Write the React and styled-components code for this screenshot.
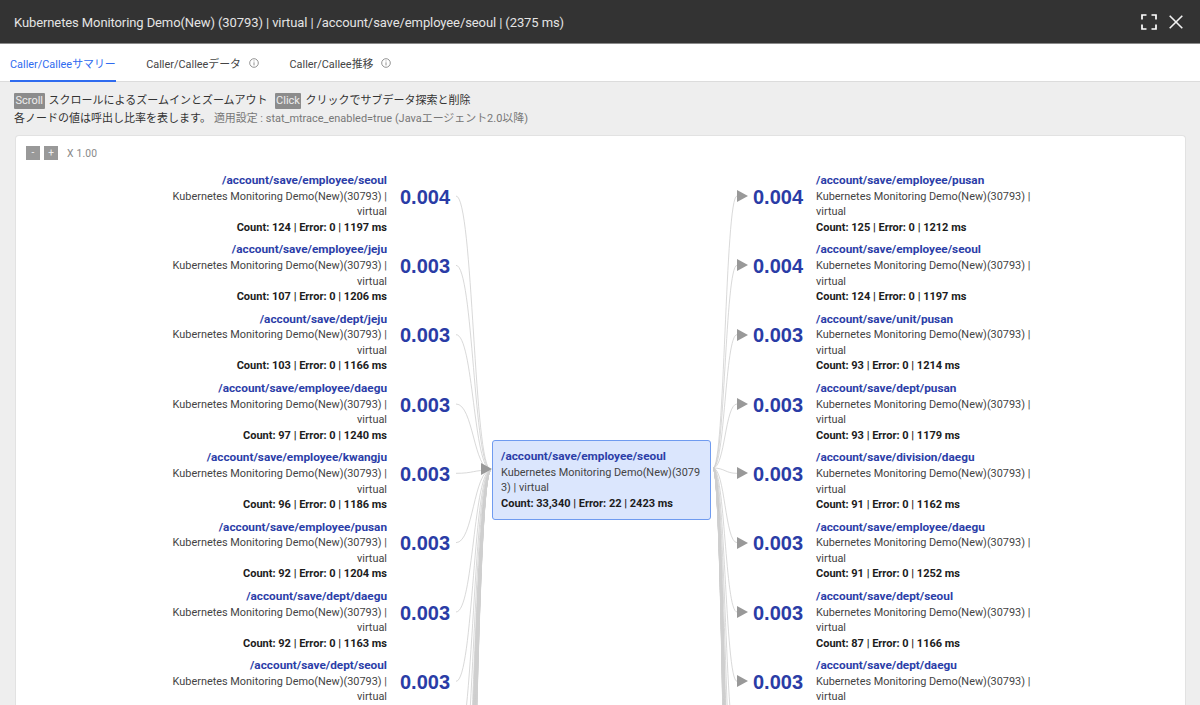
import React from "react";
import styled, { createGlobalStyle } from "styled-components";

const Global = createGlobalStyle`
  html, body { margin: 0; padding: 0; height: 705px; overflow: hidden; background: #eee; }
  body { font-family: Roboto, "Noto Sans CJK JP", sans-serif; }
`;
const Page = styled.div`width:1200px;height:705px;overflow:hidden;display:flex;flex-direction:column;background:#eeeeee;`;
const Header = styled.header`
  flex:none;height:42px;padding:1px 17px 0 14px;background:#333333;border-bottom:1px solid #8a8a8a;display:flex;align-items:center;
  justify-content:space-between;color:#e4e4e4;font-size:13px;letter-spacing:-.1px;
`;
const HeaderIcons = styled.div`display:flex;align-items:center;gap:12px;`;
const Tabs = styled.nav`flex:none;height:37px;background:#fff;border-bottom:1px solid #dcdcdc;display:flex;padding-left:10px;gap:30.5px;`;
const Tab = styled.div`
  display:flex;align-items:center;gap:8px;font-size:10.9px;height:38px;box-sizing:border-box;padding-top:1px;
  color:${p=>p.$active?"#2f6bef":"#444"};
  border-bottom:2px solid ${p=>p.$active?"#2f6bef":"transparent"};
`;
const Body = styled.main`flex:1;min-height:0;padding:10px 14px 0 15px;display:flex;flex-direction:column;`;
const Help = styled.div`font-size:11px;line-height:18px;color:#333;display:flex;align-items:center;margin-left:-1px;`;
const Badge = styled.span`background:#8c8c8c;color:#eee;padding:0 1.5px;height:16px;line-height:16px;margin-right:4px;border-radius:1px;`;
const HelpGap = styled.span`width:7px;`;
const Setting = styled.span`color:#777;margin-left:3px;font-size:10.95px;`;
const Card = styled.section`
  margin-top:7px;flex:1;min-height:0;background:#fff;border:1px solid #e2e2e2;border-bottom:none;border-radius:4px 4px 0 0;
  padding:10px 10px 0 10px;position:relative;overflow:hidden;
`;
const Zoom = styled.div`display:flex;align-items:center;gap:4px;height:14px;font-size:10.3px;color:#888;`;
const ZoomBtn = styled.span`width:14px;height:14px;background:#999;color:#eee;text-align:center;line-height:13px;font-size:10px;`;
const ZoomLabel = styled.span`margin-left:5px;letter-spacing:.2px;`;
const Diagram = styled.div`display:flex;margin-top:12px;margin-left:143px;`;
const Column = styled.div`display:flex;flex-direction:column;flex:none;`;
const Centre = styled.div`flex:none;width:219px;margin:268px 0 0 41px;`;
const LeftRow = styled.div`height:69.33px;display:flex;width:282px;`;
const RightRow = styled.div`height:69.33px;display:flex;margin-left:26px;`;
const NodeText = styled.div`
  width:218px;flex:none;font-size:10.9px;line-height:15.6px;color:#444;text-align:${p=>p.$right?"right":"left"};
`;
const Path = styled.div`font-weight:700;color:#2c3ea8;font-size:11.8px;line-height:16.6px;`;
const Stat = styled.div`font-weight:700;color:#1c1c1c;font-size:11px;`;
const Value = styled.div`flex:none;width:51px;margin:${p=>p.$right?"12.6px 12px 0 0":"12.6px 0 0 13px"};font-size:20px;line-height:24px;font-weight:700;color:#2a3ca6;font-family:"Liberation Sans",Roboto,sans-serif;`;
const Arrow = styled.span`
  flex:none;width:0;height:0;margin:18px 5px 0 0;border-left:11px solid #999;border-top:6.5px solid transparent;border-bottom:6.5px solid transparent;
`;
const CentreArrow = styled.span`
  position:absolute;left:465px;top:327px;width:0;height:0;border-left:11px solid #999;border-top:6.5px solid transparent;border-bottom:6.5px solid transparent;
`;
const CentreNode = styled.div`
  box-sizing:border-box;height:80px;background:#dbe6fd;border:1px solid #6f9bf0;border-radius:3px;padding:7px 7px 7px 8px;font-size:10.9px;line-height:15.6px;color:#444;word-break:break-all;
`;
const Edges = styled.svg`position:absolute;left:-16px;top:-136px;pointer-events:none;`;

const NAME = "Kubernetes Monitoring Demo(New)(30793) | virtual";
const left = [
  ["/account/save/employee/seoul","0.004","Count: 124 | Error: 0 | 1197 ms"],
  ["/account/save/employee/jeju","0.003","Count: 107 | Error: 0 | 1206 ms"],
  ["/account/save/dept/jeju","0.003","Count: 103 | Error: 0 | 1166 ms"],
  ["/account/save/employee/daegu","0.003","Count: 97 | Error: 0 | 1240 ms"],
  ["/account/save/employee/kwangju","0.003","Count: 96 | Error: 0 | 1186 ms"],
  ["/account/save/employee/pusan","0.003","Count: 92 | Error: 0 | 1204 ms"],
  ["/account/save/dept/daegu","0.003","Count: 92 | Error: 0 | 1163 ms"],
  ["/account/save/dept/seoul","0.003",""],
];
const right = [
  ["/account/save/employee/pusan","0.004","Count: 125 | Error: 0 | 1212 ms"],
  ["/account/save/employee/seoul","0.004","Count: 124 | Error: 0 | 1197 ms"],
  ["/account/save/unit/pusan","0.003","Count: 93 | Error: 0 | 1214 ms"],
  ["/account/save/dept/pusan","0.003","Count: 93 | Error: 0 | 1179 ms"],
  ["/account/save/division/daegu","0.003","Count: 91 | Error: 0 | 1162 ms"],
  ["/account/save/employee/daegu","0.003","Count: 91 | Error: 0 | 1252 ms"],
  ["/account/save/dept/seoul","0.003","Count: 87 | Error: 0 | 1166 ms"],
  ["/account/save/dept/daegu","0.003",""],
];

function linkPath(x0,y0,x1,y1){const m=(x0+x1)/2;return `M${x0} ${y0}C${m} ${y0} ${m} ${y1} ${x1} ${y1}`;}
const rows = Array.from({length:12},(_,i)=>196+i*69.33);
const bundle = Array.from({length:34},(_,i)=>930+i*9);
const all = [...rows,...bundle];

function App(){
  return (
    <Page>
      <Global/>
      <Header>
        <span>Kubernetes Monitoring Demo(New) (30793) | virtual | /account/save/employee/seoul | (2375 ms)</span>
        <HeaderIcons>
          <svg width="16" height="16" viewBox="0 0 16 16" fill="none" stroke="#fff" strokeWidth="1.7">
            <path d="M1 5.5V1H5.5M10.5 1H15V5.5M15 10.5V15H10.5M5.5 15H1V10.5"/>
          </svg>
          <svg width="14" height="14" viewBox="0 0 14 14" fill="none" stroke="#f2f2f2" strokeWidth="1.6">
            <path d="M.7 .7L13.3 13.3M13.3 .7L.7 13.3"/>
          </svg>
        </HeaderIcons>
      </Header>
      <Tabs>
        <Tab $active>Caller/Calleeサマリー</Tab>
        <Tab>Caller/Calleeデータ<InfoIcon/></Tab>
        <Tab>Caller/Callee推移<InfoIcon/></Tab>
      </Tabs>
      <Body>
        <Help><Badge>Scroll</Badge>スクロールによるズームインとズームアウト<HelpGap/><Badge>Click</Badge>クリックでサブデータ探索と削除</Help>
        <Help>各ノードの値は呼出し比率を表します。<Setting>適用設定 : stat_mtrace_enabled=true (Javaエージェント2.0以降)</Setting></Help>
        <Card>
          <Edges width="1200" height="705" fill="none" stroke="#cfcfcf" strokeOpacity=".8" strokeWidth="1">
            {all.map((y,i)=><path key={"l"+i} d={linkPath(456,y,491,470)}/>)}
            {all.map((y,i)=><path key={"r"+i} d={linkPath(713,468,737,y)}/>)}
          </Edges>
          <Zoom><ZoomBtn>-</ZoomBtn><ZoomBtn>+</ZoomBtn><ZoomLabel>X 1.00</ZoomLabel></Zoom>
          <Diagram>
            <Column>
              {left.map((n,i)=>(
                <LeftRow key={i}>
                  <NodeText $right><Path>{n[0]}</Path>{NAME}{n[2]&&<Stat>{n[2]}</Stat>}</NodeText>
                  <Value>{n[1]}</Value>
                </LeftRow>
              ))}
            </Column>
            <Centre>
              <CentreNode>
                <Path>/account/save/employee/seoul</Path>
                Kubernetes Monitoring Demo(New)(30793) | virtual
                <Stat>Count: 33,340 | Error: 22 | 2423 ms</Stat>
              </CentreNode>
            </Centre>
            <Column>
              {right.map((n,i)=>(
                <RightRow key={i}>
                  <Arrow/>
                  <Value $right>{n[1]}</Value>
                  <NodeText><Path>{n[0]}</Path>{NAME}{n[2]&&<Stat>{n[2]}</Stat>}</NodeText>
                </RightRow>
              ))}
            </Column>
          </Diagram>
          <CentreArrow/>
        </Card>
      </Body>
    </Page>
  );
}
function InfoIcon(){
  return <svg width="10" height="10" viewBox="0 0 10 10" fill="none" stroke="#777" strokeWidth=".8"><circle cx="5" cy="5" r="4.3"/><path d="M5 4.3V7.4M5 2.5V3.4"/></svg>;
}
export default App;
